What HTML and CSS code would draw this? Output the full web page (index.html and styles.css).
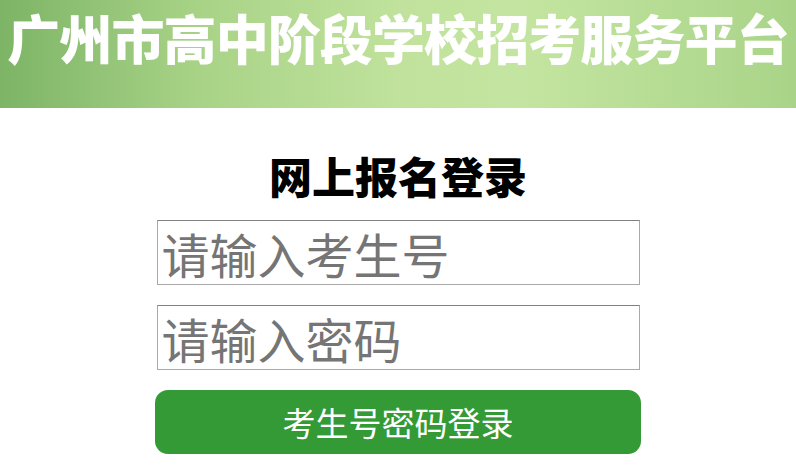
FILE: index.html
```html
<!DOCTYPE html>
<html lang="zh-CN">
<head>
<meta charset="utf-8">
<title>广州市高中阶段学校招考服务平台</title>
<link rel="stylesheet" href="styles.css">
</head>
<body>
<header class="banner">
  <h1 class="banner-title">广州市高中阶段学校招考服务平台</h1>
</header>
<main class="login">
  <h2 class="login-title">网上报名登录</h2>
  <input class="field" type="text" placeholder="请输入考生号">
  <input class="field" type="password" placeholder="请输入密码">
  <button class="submit" type="button">考生号密码登录</button>
</main>
</body>
</html>
```

FILE: styles.css
```css
html, body {
  margin: 0;
  padding: 0;
  background: #ffffff;
  font-family: "Noto Sans CJK SC", "Noto Sans", sans-serif;
}
.banner {
  height: 108px;
  background: linear-gradient(to right, #7db466 0%, #a8d387 25%, #c0e29c 50%, #c4e5a1 65%, #a9d488 100%);
  display: flex;
  justify-content: center;
  align-items: flex-start;
}
.banner-title {
  margin: 0;
  padding-top: 4px;
  font-size: 53px;
  line-height: 66px;
  letter-spacing: -0.9px;
  font-weight: 900;
  color: #ffffff;
  white-space: nowrap;
}
.login {
  display: flex;
  flex-direction: column;
  align-items: center;
}
.login-title {
  margin: 42px 0 20px;
  font-size: 43px;
  line-height: 50px;
  font-weight: 900;
  color: #000000;
}
.field {
  box-sizing: border-box;
  width: 483px;
  height: 65px;
  margin: 0 0 20px;
  padding: 0 4px;
  border: 1px solid #a9a9a9;
  border-top-color: #808080;
  font-family: "Noto Sans CJK SC", sans-serif;
  font-size: 48px;
  color: #333333;
  outline: none;
}
.field::placeholder {
  color: #757575;
}
.submit {
  box-sizing: border-box;
  width: 486px;
  height: 64px;
  border: none;
  border-radius: 13px;
  background: #339a35;
  color: #ffffff;
  font-family: "Noto Sans CJK SC", sans-serif;
  font-size: 33px;
  line-height: 1;
  cursor: pointer;
}
```
